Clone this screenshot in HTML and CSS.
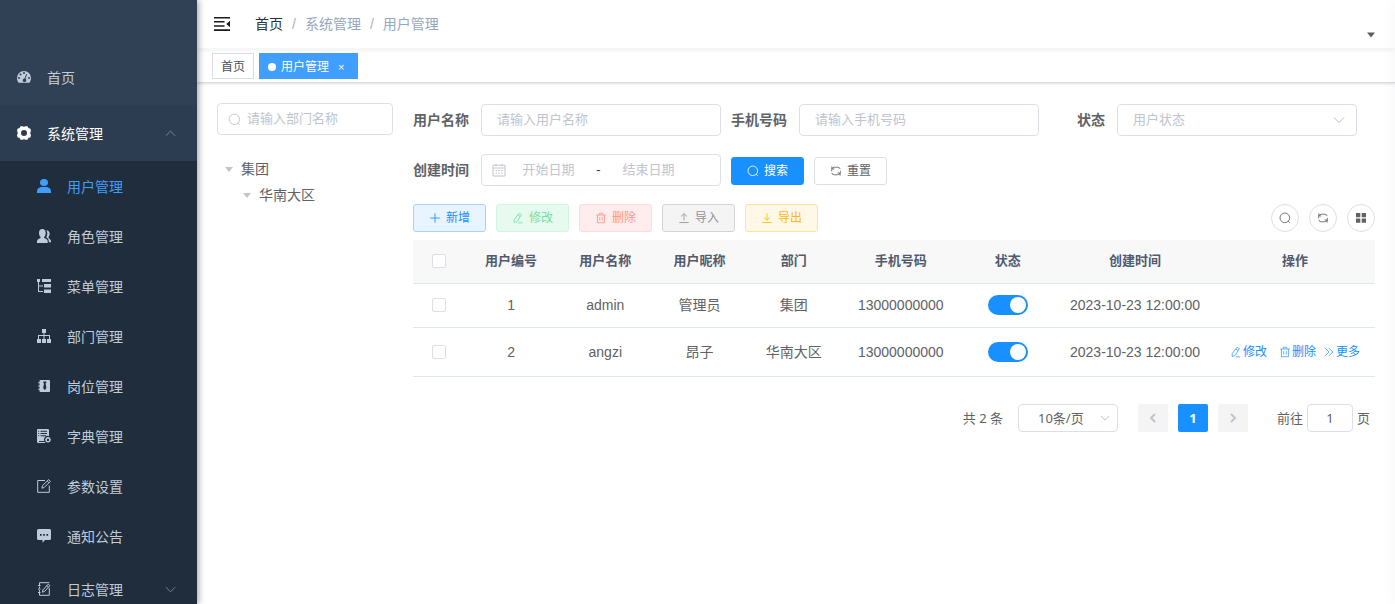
FILE: index.html
```html
<!DOCTYPE html>
<html lang="zh-CN">
<head>
<meta charset="utf-8">
<title>用户管理</title>
<link rel="stylesheet" href="styles.css">
</head>
<body>
<svg class="sprite" aria-hidden="true">
  <symbol id="i-search" viewBox="0 0 14 14"><circle cx="6.8" cy="6.8" r="5.6"/><path d="M10.6 10.600l2 2"/></symbol>
  <symbol id="i-refresh" viewBox="0 0 14 14"><path d="M1.800 7.200V6a3.400 3.400 0 0 1 3.400-3.400h4a2.600 2.600 0 0 1 2.600 2.200M2.200 1.600v3h3M12.200 6.800V8a3.400 3.400 0 0 1-3.400 3.400h-4a2.600 2.600 0 0 1-2.600-2.200M11.800 12.400v-3h-3"/></symbol>
  <symbol id="i-plus" viewBox="0 0 14 14"><path d="M7 1.5v11M1.5 7h11"/></symbol>
  <symbol id="i-edit" viewBox="0 0 14 14"><path d="M8.200 1.500l2.800 1.600-5 7.800-3.500 1.500.1-3.600zM6.900 3.700l2.800 1.700M7 12.600h5"/></symbol>
  <symbol id="i-delete" viewBox="0 0 14 14"><path d="M1.500 3.500h11M5 3.300V1.500h4v1.800M2.800 3.500v9h8.400v-9M5.500 6v4M8.500 6v4"/></symbol>
  <symbol id="i-upload" viewBox="0 0 14 14"><path d="M7 10V2.200M3.500 5.300L7 1.900l3.500 3.400M1.500 12.300h11"/></symbol>
  <symbol id="i-download" viewBox="0 0 14 14"><path d="M7 1.500v8M3.500 6.200L7 9.600l3.500-3.400M1.500 12.300h11"/></symbol>
  <symbol id="i-more" viewBox="0 0 14 14"><path d="M2.500 2.500L7 7l-4.500 4.500M7 2.500L11.500 7 7 11.500"/></symbol>
  <symbol id="i-down" viewBox="0 0 14 14"><path d="M2 4.500l5 5 5-5"/></symbol>
  <symbol id="i-up" viewBox="0 0 14 14"><path d="M2 9.500l5-5 5 5"/></symbol>
  <symbol id="i-left" viewBox="0 0 14 14"><path d="M9 3L5 7l4 4"/></symbol>
  <symbol id="i-right" viewBox="0 0 14 14"><path d="M5 3l4 4-4 4"/></symbol>
  <symbol id="i-date" viewBox="0 0 14 14"><path d="M1 2.200h12v10.800H1zM1 5h12M4 .8v2.400M10 .8v2.400M3.500 7.500h1.500M6.200 7.500h1.500M9 7.500h1.500M3.500 10.200h1.500M6.200 10.200h1.500M9 10.200h1.500"/></symbol>
</svg>

<div class="app">
  <aside class="sidebar">
    <nav class="menu">
      <a class="menu-item" href="#">
        <svg class="mi" viewBox="0 0 14 14"><path fill-rule="evenodd" d="M7 1a7 7 0 0 0-7 7c0 1.700.5 3 1.200 4.200.2.400.5.500.8.500h10c.3 0 .6-.1.800-.5C13.500 11 14 9.700 14 8a7 7 0 0 0-7-7zM2 7a1 1 0 1 1 0 2 1 1 0 0 1 0-2zM3.500 3.500a1 1 0 1 1 0 2 1 1 0 0 1 0-2zM7 2a1 1 0 1 1 0 2 1 1 0 0 1 0-2zM12 7a1 1 0 1 1 0 2 1 1 0 0 1 0-2zM9.300 4l.8.300-1.600 4.500a1.800 1.800 0 1 1-1-.3z"/></svg>
        <span>首页</span>
      </a>
      <a class="menu-item open" href="#">
        <svg class="mi" viewBox="0 0 14 14"><path fill-rule="evenodd" d="M3.600.2h2.200L7 1.100 8.200.2h2.200l1.200 2 1.700.3.700 2.300-.8 2.200.8 2.200-.7 2.300-1.700.3-1.200 2H8.200L7 12.900l-1.200.9H3.600l-1.200-2-1.700-.3L0 9.200.8 7 0 4.800l.7-2.300 1.700-.3zM7 4a3 3 0 1 0 0 6 3 3 0 0 0 0-6z"/></svg>
        <span>系统管理</span>
        <svg class="line arrow"><use href="#i-up"/></svg>
      </a>
      <div class="submenu">
        <a class="menu-item active" href="#"><svg class="mi" viewBox="0 0 14 14"><ellipse cx="7" cy="3.500" rx="4" ry="3.500"/><path d="M0 14v-1.500C0 9.500 2.500 8 5 8h4c2.500 0 5 1.500 5 4.500V14z"/></svg><span>用户管理</span></a>
        <a class="menu-item" href="#"><svg class="mi" viewBox="0 0 14 14"><path d="M5.300 0C7.500 0 8.700 1.500 8.700 4c0 1.600-.6 3-1.500 3.900v1l2.500 1.400c.7.500 1 1.200 1 2.200V14H0v-1.500c0-1 .3-1.700 1-2.200l2.500-1.400v-1C2.500 7 2 5.600 2 4 2 1.500 3.200 0 5.300 0zM9.300 1.300c2 0 3.400 1.300 3.400 3.500 0 1.300-.5 2.400-1.200 3.200v.8l1.500 1.400c.7.700 1 1.400 1 2.300v.8h-2.200c0-2.300-.2-3.200-1.300-4L9.300 8.500c.6-1.200 1-2.500 1-4 0-1.200-.3-2.300-1-3.200z"/></svg><span>角色管理</span></a>
        <a class="menu-item" href="#"><svg class="mi" viewBox="0 0 14 14"><path d="M0 0h3v3H2v3.500h4v1H2V12h4v1H1V3H0zM5 0h9v3H5zM7 5h7v3.500H7zM7 10.500h7V14H7z"/></svg><span>菜单管理</span></a>
        <a class="menu-item" href="#"><svg class="mi" viewBox="0 0 14 14"><path d="M5 0h4v4H7.500v2H13v4h1v4h-4v-4h2V7H7.500v3H9v4H5v-4h1.500V7H2v3h2v4H0v-4h1V6h5.500V4H5z"/></svg><span>部门管理</span></a>
        <a class="menu-item" href="#"><svg class="mi" viewBox="0 0 14 14"><path fill-rule="evenodd" d="M3.500 1H12a1 1 0 0 1 1 1v10a1 1 0 0 1-1 1H3.500a1 1 0 0 1-1-1v-1.200H1.200v-1h1.300V7.500H1.200v-1h1.300V4.300H1.200v-1h1.300V2a1 1 0 0 1 1-1zM6.300 2.500v1.300l.7.800L6.200 9l1.600 2.200L9.400 9l-.8-4.400.7-.8V2.500z"/></svg><span>岗位管理</span></a>
        <a class="menu-item" href="#"><svg class="mi" viewBox="0 0 14 14"><path fill-rule="evenodd" d="M1 0h10a1 1 0 0 1 1 1v6.300A3.500 3.500 0 0 0 7.300 12H2v1h6l.5 1H1.500A1.500 1.500 0 0 1 0 12.500V1a1 1 0 0 1 1-1zM3.500 1.700v1H10v-1zM3.500 4v1H10V4zM3.500 6.300v1H9v-1zM1.200 1.700v1h1v-1zM1.200 4v1h1V4zM1.200 6.300v1h1v-1zM11 7.800l1 .8h1.200l.2 1.300.6.900-.6 1-.3 1.200H12l-1 .8-1-.8H8.900l-.3-1.200-.6-1 .6-.9.200-1.300H10zm0 1.900a1.200 1.200 0 1 0 0 2.400 1.200 1.200 0 0 0 0-2.400z"/></svg><span>字典管理</span></a>
        <a class="menu-item" href="#"><svg class="mi line" viewBox="0 0 14 14"><path d="M8 1.500H.700v11.800h11.600V6.500M5 9.200l.5-2.600L11.700.6l1.700 1.700-6.200 6.200zM10.200 2l1.700 1.700"/></svg><span>参数设置</span></a>
        <a class="menu-item" href="#"><svg class="mi" viewBox="0 0 14 14"><path fill-rule="evenodd" d="M1.500 0h11A1.500 1.500 0 0 1 14 1.500v8a1.500 1.500 0 0 1-1.500 1.500H8l-2.500 2.800V11h-4A1.500 1.500 0 0 1 0 9.500v-8A1.500 1.500 0 0 1 1.500 0zM3 5v1.700h1.700V5zM6.200 5v1.700h1.700V5zM9.400 5v1.700h1.700V5z"/></svg><span>通知公告</span></a>
        <a class="menu-item tall" href="#"><svg class="mi line" viewBox="0 0 14 14"><path d="M2.500 3V.7h9.800M2.500 4.500v1.800M2.500 8v1.800M2.500 11v2.300h9.800V6M1 3.500h2.500M1 7h2.500M1 10.500h2.500M5.500 10.200l.4-2.300 5.400-5.800 1.600 1.500-5.300 5.800zM9.800 3.500l1.600 1.600"/></svg><span>日志管理</span><svg class="line arrow"><use href="#i-down"/></svg></a>
      </div>
    </nav>
  </aside>

  <div class="main">
    <header class="navbar">
      <button class="hamburger" type="button" aria-label="收起菜单">
        <svg viewBox="0 0 16 14"><path d="M0 0h16v1.600H0zM0 4h10.500v1.500H0zM0 8.200h10.500v1.500H0zM0 12.300h16v1.600H0zM16 3.800v6.400L12.300 7z"/></svg>
      </button>
      <nav class="breadcrumb" aria-label="面包屑">
        <a href="#">首页</a><i>/</i><span>系统管理</span><i>/</i><span>用户管理</span>
      </nav>
      <button class="user-menu" type="button" aria-label="用户菜单"></button>
    </header>

    <div class="tags">
      <a class="tag" href="#">首页</a>
      <a class="tag current" href="#">用户管理<span class="close">×</span></a>
    </div>

    <main class="content">
      <section class="dept">
        <label class="field dept-search">
          <svg class="line"><use href="#i-search"/></svg>
          <input type="text" placeholder="请输入部门名称" aria-label="部门名称">
        </label>
        <ul class="tree">
          <li><span class="node">集团</span>
            <ul><li><span class="node">华南大区</span></li></ul>
          </li>
        </ul>
      </section>

      <section class="users">
        <form class="filters">
          <div class="form-item"><label for="name">用户名称</label><input class="field" id="name" type="text" placeholder="请输入用户名称"></div>
          <div class="form-item"><label for="phone">手机号码</label><input class="field" id="phone" type="text" placeholder="请输入手机号码"></div>
          <div class="form-item"><label for="status">状态</label>
            <div class="field select">
              <select id="status"><option>用户状态</option><option>正常</option><option>停用</option></select>
              <svg class="line"><use href="#i-down"/></svg>
            </div>
          </div>
          <div class="form-item"><label for="start">创建时间</label>
            <div class="field range">
              <svg class="line"><use href="#i-date"/></svg>
              <input id="start" type="text" placeholder="开始日期"><span>-</span><input type="text" placeholder="结束日期" aria-label="结束日期">
            </div>
          </div>
          <div class="form-item buttons">
            <button class="btn primary" type="button"><svg class="line"><use href="#i-search"/></svg>搜索</button>
            <button class="btn" type="button"><svg class="line"><use href="#i-refresh"/></svg>重置</button>
          </div>
        </form>

        <div class="toolbar">
          <button class="btn blue" type="button"><svg class="line"><use href="#i-plus"/></svg>新增</button>
          <button class="btn green" type="button"><svg class="line"><use href="#i-edit"/></svg>修改</button>
          <button class="btn red" type="button"><svg class="line"><use href="#i-delete"/></svg>删除</button>
          <button class="btn gray" type="button"><svg class="line"><use href="#i-upload"/></svg>导入</button>
          <button class="btn yellow" type="button"><svg class="line"><use href="#i-download"/></svg>导出</button>
          <div class="tools">
            <button class="round" type="button" aria-label="隐藏搜索"><svg class="line"><use href="#i-search"/></svg></button>
            <button class="round" type="button" aria-label="刷新"><svg class="line"><use href="#i-refresh"/></svg></button>
            <button class="round" type="button" aria-label="显隐列"><svg viewBox="0 0 12 12"><path d="M1 1h4.300v4.300H1zM6.700 1H11v4.300H6.700zM1 6.500h4.300v4.300H1zM6.700 6.500H11v4.300H6.700z"/></svg></button>
          </div>
        </div>

        <table class="table">
          <colgroup><col class="c-check"><col><col><col><col><col class="c-phone"><col><col class="c-wide"><col class="c-wide"></colgroup>
          <thead>
            <tr><th><input class="check" type="checkbox" aria-label="全选"></th><th>用户编号</th><th>用户名称</th><th>用户昵称</th><th>部门</th><th>手机号码</th><th>状态</th><th>创建时间</th><th>操作</th></tr>
          </thead>
          <tbody>
            <tr><td><input class="check" type="checkbox" aria-label="选择 admin"></td><td>1</td><td>admin</td><td>管理员</td><td>集团</td><td>13000000000</td><td><input class="switch" type="checkbox" role="switch" checked aria-label="admin 状态"></td><td>2023-10-23 12:00:00</td><td></td></tr>
            <tr class="roomy"><td><input class="check" type="checkbox" aria-label="选择 angzi"></td><td>2</td><td>angzi</td><td>昂子</td><td>华南大区</td><td>13000000000</td><td><input class="switch" type="checkbox" role="switch" checked aria-label="angzi 状态"></td><td>2023-10-23 12:00:00</td>
              <td><div class="actions">
                <button type="button"><svg class="line"><use href="#i-edit"/></svg>修改</button>
                <button type="button"><svg class="line"><use href="#i-delete"/></svg>删除</button>
                <button class="more" type="button"><svg class="line"><use href="#i-more"/></svg>更多</button>
              </div></td></tr>
          </tbody>
        </table>

        <div class="pagination">
          <span class="total">共 2 条</span>
          <div class="field select size">
            <select aria-label="每页条数"><option>10条/页</option><option>20条/页</option></select>
            <svg class="line"><use href="#i-down"/></svg>
          </div>
          <div class="pager">
            <button type="button" disabled aria-label="上一页"><svg class="line"><use href="#i-left"/></svg></button>
            <button class="on" type="button">1</button>
            <button type="button" disabled aria-label="下一页"><svg class="line"><use href="#i-right"/></svg></button>
          </div>
          <label class="jump">前往<input class="field" type="text" value="1">页</label>
        </div>
      </section>
    </main>
  </div>
</div>
</body>
</html>
```

FILE: styles.css
```css
* { box-sizing: border-box; }

body {
  margin: 0;
  font: 14px/20px "Liberation Sans", "Noto Sans CJK SC", sans-serif;
  color: #606266;
  background: #fff;
}

a { color: inherit; text-decoration: none; }
button, input, select { font: inherit; color: inherit; margin: 0; }
button { cursor: pointer; }
ul { list-style: none; margin: 0; padding: 0; }
svg { fill: currentColor; flex: none; }
.line { fill: none; stroke: currentColor; stroke-width: 1; }
.sprite { position: absolute; width: 0; height: 0; }

.app { display: flex; height: 100vh; overflow: hidden; }

.app::after {
  content: "";
  position: fixed;
  top: 0;
  bottom: 0;
  left: 100%;
  width: 10px;
  box-shadow: 0 0 15px rgba(0, 0, 0, .05);
}

/* sidebar */
.sidebar {
  flex: none;
  width: 197px;
  padding-top: 49px;
  overflow: hidden;
  background: #304156;
  box-shadow: 2px 0 6px rgba(0, 21, 41, .35);
  z-index: 2;
}

.menu-item {
  display: flex;
  align-items: center;
  height: 56px;
  padding: 0 20px 0 17px;
  color: #bfcbd9;
}

.menu-item span { padding-top: 1px; }
.mi { width: 14px; height: 14px; margin-right: 16px; }
.menu-item.open { color: #fff; background: #2d3d51; }
.arrow { width: 13px; height: 13px; margin-left: auto; color: #7d8791; }
.submenu { background: #1f2d3d; }
.submenu .menu-item { height: 50px; padding-left: 37px; }
.submenu .tall { height: 56px; }
.submenu .active { color: #409eff; }

/* top bars */
.main { flex: 1; min-width: 0; }

.navbar {
  display: flex;
  align-items: center;
  height: 49px;
  padding: 0 19px 2px 17px;
  box-shadow: 0 1px 4px rgba(0, 21, 41, .08);
}

.hamburger { padding: 0; border: 0; background: none; color: #1b1b1b; }
.hamburger svg { display: block; width: 16px; height: 14px; }
.breadcrumb { display: flex; margin-left: 25px; color: #97a8be; }
.breadcrumb a { color: #303133; }
.breadcrumb i { margin: 0 9px; font-style: normal; color: #a9b2c0; }

.user-menu {
  align-self: flex-end;
  width: 10px;
  height: 6px;
  margin: 0 0 9px auto;
  padding: 0;
  border: 0;
  background: #5a5e66;
  clip-path: polygon(10% 10%, 90% 10%, 50% 90%);
}

.tags {
  display: flex;
  gap: 5px;
  height: 34px;
  padding: 4px 15px;
  border-bottom: 1px solid #d8dce5;
  box-shadow: 0 1px 3px rgba(0, 0, 0, .12), 0 0 3px rgba(0, 0, 0, .04);
}

.tag {
  display: flex;
  align-items: center;
  height: 26px;
  padding: 1px 8px 0;
  border: 1px solid #d8dce5;
  font-size: 12px;
  color: #495060;
}

.tag.current { padding-right: 13px; border-color: #409eff; background: #409eff; color: #fff; }
.tag.current::before { content: ""; width: 8px; height: 8px; margin-right: 5px; border-radius: 50%; background: #fff; }
.close { margin-left: 9px; font-size: 11px; }

/* page body */
.content { display: flex; gap: 20px; padding: 20px; }
.dept { flex: none; width: 176px; }
.users { flex: 1; min-width: 0; }

.field {
  height: 32px;
  border: 1px solid #dcdfe6;
  border-radius: 4px;
  background: #fff;
  font-size: 13px;
  outline: 0;
}

::placeholder { color: #bfc4cd; opacity: 1; }

.dept-search { display: flex; align-items: center; gap: 6px; padding: 0 10px; color: #c0c4cc; }
.dept-search svg { width: 13px; height: 13px; }
.dept-search input { flex: 1; min-width: 0; padding: 0; border: 0; outline: 0; background: none; color: #606266; }

.tree { margin-top: 21px; }
.tree ul { padding-left: 18px; }
.node { display: flex; align-items: center; height: 26px; padding-left: 8px; }
.node::before { content: ""; margin-right: 8px; border: 4px solid transparent; border-top: 5px solid #c0c4cc; border-bottom: 0; }

/* filters */
.filters { display: flex; flex-wrap: wrap; gap: 18px 10px; padding-top: 1px; }
.form-item { display: flex; align-items: center; }
.form-item > label { width: 68px; padding-right: 12px; font-weight: 700; text-align: right; white-space: nowrap; }
.form-item > .field { width: 240px; }
.form-item > input { padding: 0 15px 2px; }
.form-item.buttons { gap: 10px; padding-top: 2px; }

.select { display: flex; align-items: center; position: relative; }
.select select { width: 100%; height: 100%; padding: 0 30px 0 15px; border: 0; outline: 0; appearance: none; background: none; color: #bfc4cd; }
.select svg { position: absolute; right: 10px; width: 14px; height: 14px; color: #b4b9c2; pointer-events: none; }

.range { display: flex; align-items: center; padding: 0 10px; }
.range svg { width: 14px; height: 14px; color: #c0c4cc; }
.range input { width: 85px; padding: 0; border: 0; outline: 0; background: none; text-align: center; }
.range span { width: 15px; text-align: center; color: #303133; }

.btn {
  display: inline-flex;
  align-items: center;
  justify-content: center;
  gap: 5px;
  min-width: 73px;
  height: 28px;
  padding: 0 12px;
  border: 1px solid #dcdfe6;
  border-radius: 3px;
  background: #fff;
  font-size: 12px;
  line-height: 16px;
}

.btn svg { width: 12px; height: 12px; }
.btn.primary { border-color: #1890ff; background: #1890ff; color: #fff; }
.btn.blue { border-color: #a3d3ff; background: #e8f4ff; color: #1890ff; }
.btn.green { border-color: #d0f5e0; background: #e7faf0; color: #71e2a3; }
.btn.red { border-color: #ffdbdb; background: #ffeded; color: #ff9292; }
.btn.gray { border-color: #d3d4d6; background: #f4f4f5; color: #909399; }
.btn.yellow { border-color: #ffe399; background: #fff8e6; color: #ffba00; }

.toolbar { display: flex; gap: 10px; margin: 18px 0 8px; }
.tools { display: flex; gap: 10px; margin-left: auto; }
.round { display: grid; place-items: center; width: 28px; height: 28px; padding: 0; border: 1px solid #dcdfe6; border-radius: 50%; background: #fff; }
.round svg { width: 12px; height: 12px; }

/* table */
.table { width: 100%; table-layout: fixed; border-collapse: separate; border-spacing: 0; text-align: center; }
.c-check { width: 51px; }
.c-phone { width: 120px; }
.c-wide { width: 160px; }
.table th, .table td { height: 44px; padding: 0; border-bottom: 1px solid #dfe6ec; white-space: nowrap; }
.table th { padding-bottom: 1px; background: #f8f8f9; color: #515a6e; font-size: 13px; }
.table td { padding-bottom: 1px; }
.table .roomy td { height: 49px; padding: 0; }

.check { display: block; width: 14px; height: 14px; margin: 0 auto; appearance: none; border: 1px solid #dcdfe6; border-radius: 2px; background: #fff; }
.check:checked { background: #1890ff; }

.switch { display: block; width: 40px; height: 20px; margin: 0 auto; padding: 2px; appearance: none; border-radius: 10px; background: #dcdfe6; }
.switch::before { content: ""; display: block; width: 16px; height: 16px; border-radius: 50%; background: #fff; }
.switch:checked { background: #1890ff; }
.switch:checked::before { margin-left: auto; }

.actions { display: flex; justify-content: center; gap: 12px; }
.actions button { display: flex; align-items: center; gap: 1px; padding: 0; border: 0; background: none; font-size: 12px; color: #1890ff; }
.actions svg { width: 12px; height: 12px; opacity: .8; }
.actions .more { margin-left: -5px; }

/* pagination */
.pagination {
  display: flex;
  align-items: center;
  justify-content: flex-end;
  gap: 20px;
  padding: 27px 5px 0;
  font: 13px/20px "Noto Sans", "Noto Sans CJK SC", sans-serif;
}

.pagination .field { height: 28px; }
.total { margin-right: -5px; }
.size { width: 100px; }
.size select { padding: 0 20px 1px 19px; color: #606266; }
.size svg { right: 6px; width: 12px; height: 12px; }
.pager { display: flex; gap: 10px; }
.pager button { display: grid; place-items: center; width: 30px; height: 28px; padding: 0; border: 0; border-radius: 2px; background: #f4f4f5; color: #c0c4cc; font-weight: 700; }
.pager .on { background: #1890ff; color: #fff; }
.pager svg { width: 14px; height: 14px; stroke-width: 2; }
.jump { display: flex; align-items: center; gap: 4px; margin-left: 9px; }
.jump input { width: 46px; padding: 0; text-align: center; }
```
